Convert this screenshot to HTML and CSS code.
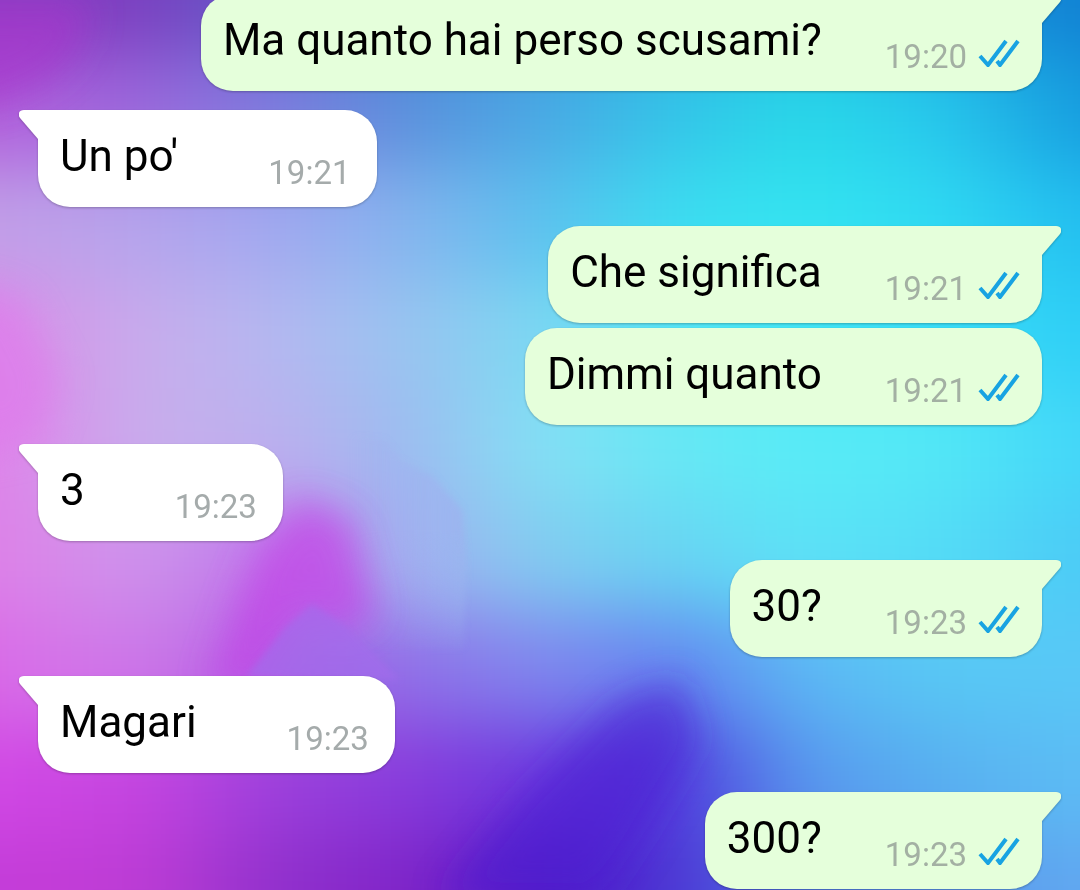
FILE: index.html
```html
<!DOCTYPE html>
<html lang="it">
<head>
    <meta charset="UTF-8">
    <meta name="viewport" content="width=device-width, initial-scale=1.0">
    <title>Chat</title>
    <link rel="stylesheet" href="styles.css">
</head>
<body>
    <svg class="symbols" aria-hidden="true">
        <symbol id="ticks" viewBox="0 0 42 28">
            <path d="M2 17L10 26L28 2M19 22L22 26L40 2" fill="none" stroke="#18a3e2" stroke-width="4"/>
        </symbol>
        <symbol id="tail-in" viewBox="0 0 20 30">
            <path d="M20 0H5C0 0-2 4 1 8L19 29H20Z" fill="#fff"/>
        </symbol>
        <symbol id="tail-out" viewBox="0 0 20 30">
            <path d="M0 0H15C20 0 22 4 19 8L1 29H0Z" fill="#e5ffdb"/>
        </symbol>
    </svg>

    <!-- wallpaper -->
    <div class="wallpaper" aria-hidden="true">
        <div class="bands">
            <div class="band band-1"></div>
            <div class="band band-2"></div>
            <div class="band band-3"></div>
            <div class="band band-4"></div>
            <div class="band band-5"></div>
            <div class="band band-6"></div>
            <div class="band band-7"></div>
            <div class="band band-8"></div>
            <div class="band band-9"></div>
        </div>
        <svg class="petals" viewBox="0 0 1080 890" preserveAspectRatio="none">
            <defs>
                <filter id="soft"><feGaussianBlur stdDeviation="3"/></filter>
                <filter id="haze" x="-50%" y="-50%" width="200%" height="200%"><feGaussianBlur stdDeviation="18"/></filter>
                <linearGradient id="petal" x1="0" y1="0" x2="1" y2="0">
                    <stop offset="0.3" stop-color="#a4aef0" stop-opacity="0"/>
                    <stop offset="1" stop-color="#9cb4ef" stop-opacity="0.9"/>
                </linearGradient>
                <linearGradient id="petal-fade" x1="0" y1="0" x2="0" y2="1">
                    <stop offset="0.5" stop-color="#fff"/>
                    <stop offset="1" stop-color="#000"/>
                </linearGradient>
                <mask id="petal-mask"><rect x="250" y="400" width="300" height="260" fill="url(#petal-fade)"/></mask>
            </defs>
            <path d="M-60 0H90L80 50L50 80L0 102L-60 110Z" fill="#a834cc" opacity="0.6" filter="url(#haze)"/>
            <path d="M-60 280L20 300L60 380L40 440L-60 460Z" fill="#e078ec" opacity="0.6" filter="url(#haze)"/>
            <path d="M300 430L385 440L402 462L432 476L462 510L466 560L464 650H330Z" fill="url(#petal)" mask="url(#petal-mask)" filter="url(#soft)"/>
            <path d="M210 690L240 600L260 550L300 500L350 520L375 620L330 630L305 610L250 690Z" fill="#c440e6" opacity="0.65" filter="url(#haze)"/>
            <path d="M247 676L285 628L312 604L345 625L400 680Z" fill="#a26cec" opacity="0.65" filter="url(#soft)"/>
            <path d="M440 900L520 800L620 700L680 680L700 740L640 840L600 900Z" fill="#4c1ed2" opacity="0.55" filter="url(#haze)"/>
        </svg>
    </div>

    <main class="chat">
        <div class="message out first">
            <svg class="tail"><use href="#tail-out"/></svg>
            <p class="text">Ma quanto hai perso scusami?</p>
            <time class="time">19:20</time>
            <svg class="ticks" role="img" aria-label="Letto"><use href="#ticks"/></svg>
        </div>
        <div class="message in first">
            <svg class="tail"><use href="#tail-in"/></svg>
            <p class="text">Un po'</p>
            <time class="time">19:21</time>
        </div>
        <div class="message out first">
            <svg class="tail"><use href="#tail-out"/></svg>
            <p class="text">Che significa</p>
            <time class="time">19:21</time>
            <svg class="ticks" role="img" aria-label="Letto"><use href="#ticks"/></svg>
        </div>
        <div class="message out">
            <p class="text">Dimmi quanto</p>
            <time class="time">19:21</time>
            <svg class="ticks" role="img" aria-label="Letto"><use href="#ticks"/></svg>
        </div>
        <div class="message in first">
            <svg class="tail"><use href="#tail-in"/></svg>
            <p class="text">3</p>
            <time class="time">19:23</time>
        </div>
        <div class="message out first">
            <svg class="tail"><use href="#tail-out"/></svg>
            <p class="text">30?</p>
            <time class="time">19:23</time>
            <svg class="ticks" role="img" aria-label="Letto"><use href="#ticks"/></svg>
        </div>
        <div class="message in first">
            <svg class="tail"><use href="#tail-in"/></svg>
            <p class="text">Magari</p>
            <time class="time">19:23</time>
        </div>
        <div class="message out first">
            <svg class="tail"><use href="#tail-out"/></svg>
            <p class="text">300?</p>
            <time class="time">19:23</time>
            <svg class="ticks" role="img" aria-label="Letto"><use href="#ticks"/></svg>
        </div>
    </main>
</body>
</html>
```
FILE: styles.css
```css
* {
    box-sizing: border-box;
}
body {
    margin: 0;
    font-family: Roboto, sans-serif;
    background-color: #7cb4ee;
}
.symbols {
    position: absolute;
    width: 0;
    height: 0;
}

/* wallpaper: rows of colour melted together */
.wallpaper {
    position: fixed;
    inset: 0;
    overflow: hidden;
    z-index: -1;
}
.bands {
    position: absolute;
    inset: -166px -120px;
    display: flex;
    flex-direction: column;
    filter: blur(36px);
}
.band {
    flex: 1;
}
.band-1, .band-9 {
    flex: 2;
}
.band-1 {
    background: linear-gradient(90deg, #903cc4, #883cc0, #7a40c0, #5c5cc8, #4080d0, #3098dc, #24a8e0, #20b0e0, #1898dc, #1282d4, #1080d0);
}
.band-2 {
    background: linear-gradient(90deg, #b45cd8, #b060dc, #9a68dc, #7e7cde, #5a90dc, #4aa8e4, #34c4e8, #28d8e8, #28c8ec, #18a0e0, #1090dc);
}
.band-3 {
    background: linear-gradient(90deg, #c49ce8, #c0a0e8, #b4a4ec, #a0a8f0, #84b4ee, #5cc0ee, #3cdcf0, #34e4f0, #30daf2, #24c0f0, #20b8f0);
}
.band-4 {
    background: linear-gradient(90deg, #e07cea, #d890e8, #c8acec, #b4b8f0, #98c4f0, #7cd8f2, #56e4f4, #40e4f4, #38dcf6, #30d0f6, #2ccaf6);
}
.band-5 {
    background: linear-gradient(90deg, #e474e8, #dc88ea, #c8aeec, #bcb0ee, #9cbcf0, #84e0f4, #68e8f4, #58ecf6, #54e8f6, #44d8f8, #40d0f8);
}
.band-6 {
    background: linear-gradient(90deg, #e074e8, #dc84e8, #cc94ec, #c074ea, #a4b0f0, #82ccf0, #68d4f2, #5ce2f6, #54dcf6, #4cccf6, #48c8f6);
}
.band-7 {
    background: linear-gradient(90deg, #dc54e4, #d870e8, #cc78e8, #b060e4, #9070e8, #8088ee, #6484f0, #5cb8f4, #58c8f4, #58c8f6, #58c8f6);
}
.band-8 {
    background: linear-gradient(90deg, #d848e8, #d048e4, #c444e0, #9c40dc, #883cdc, #6c38de, #5038dc, #5898ee, #58b0f0, #5cbcf4, #5cbcf4);
}
.band-9 {
    background: linear-gradient(90deg, #c43cd8, #c43cd8, #bc3cd4, #9030cc, #8024c8, #5018c4, #4c34d4, #5078e4, #5c90ec, #60a8f0, #60a8f0);
}
.petals {
    position: absolute;
    width: 100%;
    height: 100%;
}

/* messages */
.chat {
    display: flex;
    flex-direction: column;
    justify-content: flex-end;
    gap: 5px;
    height: 100vh;
    padding: 0 38px 1px;
    overflow: hidden;
}
.message {
    position: relative;
    display: flex;
    flex-shrink: 0;
    align-items: flex-end;
    padding: 20px 22px 14px;
    border-radius: 32px;
    filter: drop-shadow(0 1px 1px rgba(0, 0, 0, 0.25));
}
.first {
    margin-top: 14px;
}
.in {
    align-self: flex-start;
    gap: 90px;
    padding-right: 26px;
    background-color: #fff;
}
.out {
    align-self: flex-end;
    background-color: #e5ffdb;
}
.in.first {
    border-top-left-radius: 0;
}
.out.first {
    border-top-right-radius: 0;
}
.text {
    margin: 0 0 11px;
    font-size: 44px;
    line-height: 52px;
    color: #000;
}
.time {
    font-size: 33px;
    line-height: 40px;
    color: #a5abab;
}
.out .time {
    margin-left: 63px;
    color: #a3b0a3;
}
.ticks {
    width: 42px;
    height: 28px;
    margin: 0 0 10px 11px;
}
.tail {
    position: absolute;
    top: 0;
    width: 20px;
    height: 30px;
}
.in .tail {
    left: -19px;
}
.out .tail {
    right: -19px;
}
```
